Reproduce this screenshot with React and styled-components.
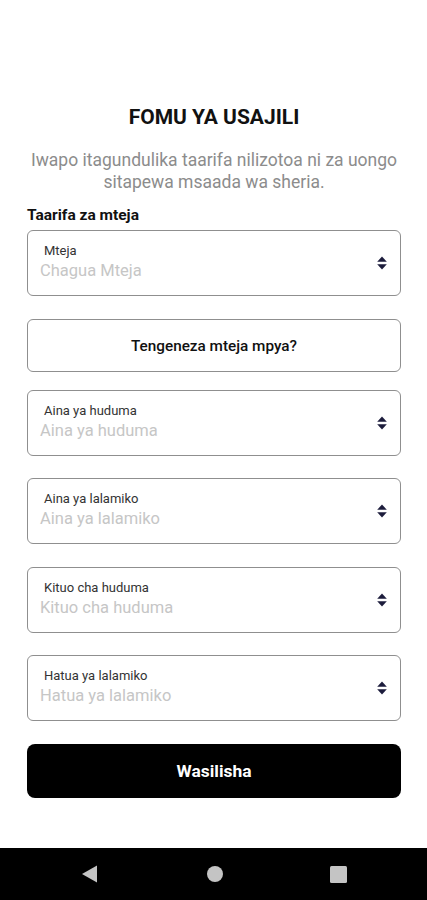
import React from 'react'
import styled, { createGlobalStyle } from 'styled-components'

const GlobalStyle = createGlobalStyle`
    html, body {
        margin: 0;
        padding: 0;
        background: #ffffff;
        font-family: Roboto, "Liberation Sans", sans-serif;
    }
    * { box-sizing: border-box; }
`

const fields = [
    { label: 'Mteja', placeholder: 'Chagua Mteja' },
    { label: 'Aina ya huduma', placeholder: 'Aina ya huduma' },
    { label: 'Aina ya lalamiko', placeholder: 'Aina ya lalamiko' },
    { label: 'Kituo cha huduma', placeholder: 'Kituo cha huduma' },
    { label: 'Hatua ya lalamiko', placeholder: 'Hatua ya lalamiko' },
]

function SortIcon() {
    return (
        <svg width="10" height="14" viewBox="0 0 10 14">
            <path d="M5 0.5 L9.8 5.8 L0.2 5.8 Z" fill="#1c1c3c" />
            <path d="M5 13.5 L9.8 8.2 L0.2 8.2 Z" fill="#1c1c3c" />
        </svg>
    )
}

function SelectField({ label, placeholder }) {
    return (
        <Field>
            <FieldText>
                <FieldLabel>{label}</FieldLabel>
                <Placeholder>{placeholder}</Placeholder>
            </FieldText>
            <SortIcon />
        </Field>
    )
}

function App() {
    const [first, ...rest] = fields
    return (
        <Page>
            <GlobalStyle />
            <Content>
                <Title>FOMU YA USAJILI</Title>
                <Notice>
                    Iwapo itagundulika taarifa nilizotoa ni za uongo sitapewa msaada wa sheria.
                </Notice>
                <SectionLabel>Taarifa za mteja</SectionLabel>
                <Form>
                    <SelectField {...first} />
                    <OutlineButton>Tengeneza mteja mpya?</OutlineButton>
                    {rest.map(f => (
                        <SelectField key={f.label} {...f} />
                    ))}
                    <SubmitButton>Wasilisha</SubmitButton>
                </Form>
            </Content>
            <NavBar>
                <svg width="20" height="20" viewBox="0 0 20 20">
                    <path d="M2 10 L17 1.5 L17 18.5 Z" fill="#c4c4c4" />
                </svg>
                <svg width="18" height="18" viewBox="0 0 18 18">
                    <circle cx="9" cy="9" r="8" fill="#c4c4c4" />
                </svg>
                <svg width="17" height="17" viewBox="0 0 17 17">
                    <rect x="0" y="0" width="17" height="17" rx="1.5" fill="#c4c4c4" />
                </svg>
            </NavBar>
        </Page>
    )
}

export default App

const Page = styled.div`
    min-height: 100vh;
    display: flex;
    flex-direction: column;
`

const Content = styled.div`
    flex: 1;
    padding: 104px 26px 0 27px;
    display: flex;
    flex-direction: column;
`

const Title = styled.h1`
    margin: 0;
    text-align: center;
    font-size: 21px;
    line-height: 26px;
    font-weight: 700;
    color: #111;
`

const Notice = styled.p`
    margin: 19px 0 0;
    text-align: center;
    font-size: 17.5px;
    line-height: 22px;
    color: #8c8c8c;
`

const SectionLabel = styled.div`
    margin-top: 13px;
    font-size: 15.5px;
    line-height: 18px;
    font-weight: 700;
    color: #111;
`

const Form = styled.div`
    margin-top: 6px;
    display: flex;
    flex-direction: column;
    gap: 22.5px;
`

const Field = styled.div`
    height: 66px;
    border: 1px solid #8f8f8f;
    border-radius: 6px;
    padding: 12px 13px 12px 16px;
    display: flex;
    align-items: center;
    justify-content: space-between;
`

const FieldText = styled.div`
    display: flex;
    flex-direction: column;
    align-self: stretch;
`

const FieldLabel = styled.span`
    font-size: 13px;
    line-height: 16px;
    color: #333;
`

const Placeholder = styled.span`
    margin-left: -4px;
    font-size: 16.5px;
    line-height: 24px;
    color: #c6c6c6;
`

const OutlineButton = styled.div`
    height: 53px;
    margin-top: 0.5px;
    margin-bottom: -5px;
    border: 1px solid #8f8f8f;
    border-radius: 6px;
    display: flex;
    align-items: center;
    justify-content: center;
    font-size: 15.3px;
    font-weight: 500;
    color: #111;
`

const SubmitButton = styled.div`
    height: 54px;
    background: #000;
    border-radius: 8px;
    display: flex;
    align-items: center;
    justify-content: center;
    color: #fff;
    font-size: 17.4px;
    font-weight: 700;
`

const NavBar = styled.div`
    height: 52px;
    margin-top: 50px;
    background: #000;
    display: flex;
    align-items: center;
    justify-content: space-between;
    padding: 0 80px;
`
